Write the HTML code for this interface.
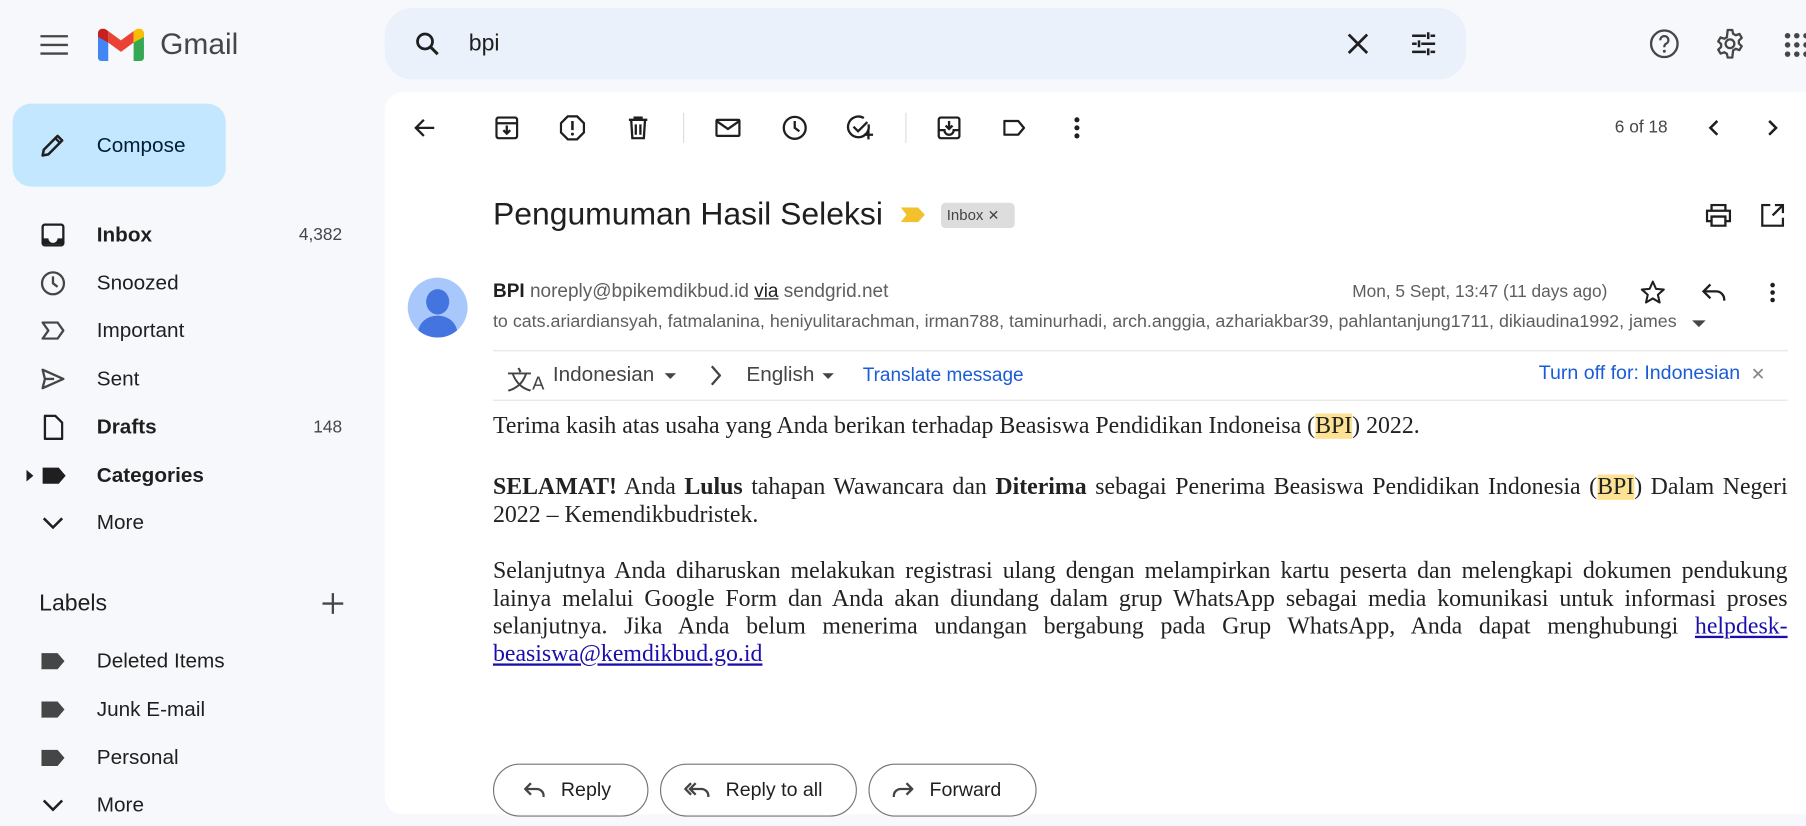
<!DOCTYPE html>
<html><head><meta charset="utf-8"><style>
*{box-sizing:border-box;margin:0;padding:0}
html,body{width:1806px;height:826px;overflow:hidden;background:#f6f8fc}
#w{position:absolute;left:0;top:0;width:1568px;height:717px;transform:scale(1.15179);transform-origin:0 0;font-family:"Liberation Sans",Arial,sans-serif;color:#1f1f1f}
.a{position:absolute}
.ic{position:absolute;transform:translate(-50%,-50%)}
.nav{position:absolute;left:84px;font-size:18px;color:#1f1f1f;transform:translateY(-50%)}
.cnt{position:absolute;right:1271px;font-size:15px;color:#444746;transform:translateY(-50%)}
.tb{position:absolute;top:111px;transform:translate(-50%,-50%)}
.body{position:absolute;left:428px;width:1124px;font-family:"Liberation Serif","Times New Roman",serif;font-size:20.7px;line-height:24px;color:#222;text-align:justify}
.hl{background:#fde293}
.btn{position:absolute;top:663px;height:46px;border:1px solid #747775;border-radius:24px;font-size:17px;color:#1f1f1f;display:flex;align-items:center;padding-left:26px}
.btn svg{margin-right:14px}
</style></head><body><div id="w">
<!-- header -->
<svg class="ic" style="left:47px;top:39px" width="24" height="18" viewBox="0 0 24 18"><path d="M0 1.5h24M0 9h24M0 16.5h24" stroke="#444746" stroke-width="2"/></svg>
<svg class="a" style="left:85px;top:25px" width="40" height="28" viewBox="0 0 40 28"><path d="M0 4v21a3 3 0 0 0 3 3h6V12z" fill="#4285f4"/><path d="M31 12v16h6a3 3 0 0 0 3-3V4z" fill="#34a853"/><path d="M9 12 20 20 31 12V2L20 10 9 2z" fill="#ea4335"/><path d="M0 4v3l9 5V2L6 0C3 -1 0 1 0 4z" fill="#c5221f"/><path d="M31 2v10l9-5V4c0-3-3-5-6-4z" fill="#fbbc04"/></svg>
<div class="a" style="left:139px;top:23px;font-size:26px;color:#444746">Gmail</div>
<div class="a" style="left:334px;top:7px;width:939px;height:62px;border-radius:24px;background:#eaf1fb"></div>
<svg class="ic" style="left:371px;top:38px" width="24" height="24" viewBox="0 0 24 24"><circle cx="10" cy="10" r="6.5" fill="none" stroke="#1f1f1f" stroke-width="2.4"/><path d="M15 15l6 6" stroke="#1f1f1f" stroke-width="2.6"/></svg>
<div class="a" style="left:407px;top:27px;font-size:20px">bpi</div>
<svg class="ic" style="left:1179px;top:38px" width="20" height="20" viewBox="0 0 20 20"><path d="M2 2l16 16M18 2 2 18" stroke="#1f1f1f" stroke-width="2.4"/></svg>
<svg class="ic" style="left:1236px;top:38px" width="24" height="24" viewBox="0 0 24 24"><path d="M2 5h12M18 5h4M2 12h4M10 12h12M2 19h12M18 19h4M16 2v6M8 9v6M16 16v6" stroke="#1f1f1f" stroke-width="2.2" fill="none"/></svg>
<svg class="ic" style="left:1445px;top:38px" width="26" height="26" viewBox="0 0 26 26"><circle cx="13" cy="13" r="11.5" fill="none" stroke="#444746" stroke-width="2"/><path d="M9.5 10a3.5 3.5 0 1 1 5 3c-1.2.7-1.5 1.3-1.5 3" fill="none" stroke="#444746" stroke-width="2"/><circle cx="13" cy="19.5" r="1.3" fill="#444746"/></svg>
<svg class="ic" style="left:1502px;top:38px" width="26" height="26" viewBox="0 0 26 26"><path d="M11 1h4l.7 3.3 2.3 1.3 3.2-1.1 2 3.4-2.5 2.3v2.6l2.5 2.3-2 3.4-3.2-1.1-2.3 1.3L15 25h-4l-.7-3.3-2.3-1.3-3.2 1.1-2-3.4 2.5-2.3v-2.6L2.8 10.9l2-3.4 3.2 1.1 2.3-1.3z" fill="none" stroke="#444746" stroke-width="2" stroke-linejoin="round"/><circle cx="13" cy="13" r="3.8" fill="none" stroke="#444746" stroke-width="2"/></svg>
<svg class="a" style="left:1548px;top:28px" width="20" height="22" viewBox="0 0 20 22"><g fill="#444746"><circle cx="4" cy="3" r="2.4"/><circle cx="12" cy="3" r="2.4"/><circle cx="20" cy="3" r="2.4"/><circle cx="4" cy="11" r="2.4"/><circle cx="12" cy="11" r="2.4"/><circle cx="20" cy="11" r="2.4"/><circle cx="4" cy="19" r="2.4"/><circle cx="12" cy="19" r="2.4"/><circle cx="20" cy="19" r="2.4"/></g></svg>
<!-- compose -->
<div class="a" style="left:11px;top:90px;width:185px;height:72px;border-radius:16px;background:#c2e7ff"></div>
<svg class="ic" style="left:46px;top:126px" width="24" height="24" viewBox="0 0 24 24"><path d="M3 21l1-5L16 4l4 4L8 20z" fill="none" stroke="#1f1f1f" stroke-width="2.2" stroke-linejoin="round"/><path d="M14 6l4 4" stroke="#1f1f1f" stroke-width="2"/></svg>
<div class="a" style="left:84px;top:116px;font-size:18px;color:#001d35">Compose</div>
<!-- nav -->
<svg class="ic" style="left:46px;top:204px" width="20" height="20" viewBox="0 0 20 20"><rect x="1" y="1" width="18" height="18" rx="2" fill="none" stroke="#1f1f1f" stroke-width="2"/><path d="M1 13h5a4 4 0 0 0 8 0h5v5H1z" fill="#1f1f1f"/></svg>
<div class="nav" style="top:204px;font-weight:bold">Inbox</div><div class="cnt" style="top:204px">4,382</div>
<svg class="ic" style="left:46px;top:246px" width="22" height="22" viewBox="0 0 22 22"><circle cx="11" cy="11" r="9.5" fill="none" stroke="#444746" stroke-width="2"/><path d="M11 5v6l4 3" fill="none" stroke="#444746" stroke-width="2"/></svg>
<div class="nav" style="top:246px">Snoozed</div>
<svg class="ic" style="left:46px;top:287px" width="22" height="16" viewBox="0 0 22 16"><path d="M2 1h13l5 7-5 7H2l5-7z" fill="none" stroke="#444746" stroke-width="2" stroke-linejoin="round"/></svg>
<div class="nav" style="top:287px">Important</div>
<svg class="ic" style="left:46px;top:329px" width="22" height="20" viewBox="0 0 22 20"><path d="M2 2l18 8-18 8 2-8zM4 10h8" fill="none" stroke="#444746" stroke-width="2" stroke-linejoin="round"/></svg>
<div class="nav" style="top:329px">Sent</div>
<svg class="ic" style="left:46px;top:371px" width="18" height="22" viewBox="0 0 18 22"><path d="M2 1h9l6 6v14H2z" fill="none" stroke="#1f1f1f" stroke-width="2" stroke-linejoin="round"/></svg>
<div class="nav" style="top:371px;font-weight:bold">Drafts</div><div class="cnt" style="top:371px">148</div>
<svg class="a" style="left:22px;top:408px" width="8" height="10"><path d="M1 0l6 5-6 5z" fill="#1f1f1f"/></svg>
<svg class="ic" style="left:47px;top:413px" width="22" height="16" viewBox="0 0 22 16"><path d="M1 1h14l6 7-6 7H1z" fill="#1f1f1f"/></svg>
<div class="nav" style="top:413px;font-weight:bold">Categories</div>
<svg class="ic" style="left:46px;top:454px" width="20" height="12" viewBox="0 0 20 12"><path d="M2 2l8 8 8-8" fill="none" stroke="#1f1f1f" stroke-width="2.2"/></svg>
<div class="nav" style="top:454px">More</div>
<div class="a" style="left:34px;top:513px;font-size:20px;color:#1f1f1f">Labels</div>
<svg class="ic" style="left:289px;top:524px" width="20" height="20" viewBox="0 0 20 20"><path d="M10 1v18M1 10h18" stroke="#444746" stroke-width="2"/></svg>
<svg class="ic" style="left:46px;top:574px" width="22" height="16" viewBox="0 0 22 16"><path d="M1 1h14l6 7-6 7H1z" fill="#444746"/></svg>
<div class="nav" style="top:574px">Deleted Items</div>
<svg class="ic" style="left:46px;top:616px" width="22" height="16" viewBox="0 0 22 16"><path d="M1 1h14l6 7-6 7H1z" fill="#444746"/></svg>
<div class="nav" style="top:616px">Junk E-mail</div>
<svg class="ic" style="left:46px;top:658px" width="22" height="16" viewBox="0 0 22 16"><path d="M1 1h14l6 7-6 7H1z" fill="#444746"/></svg>
<div class="nav" style="top:658px">Personal</div>
<svg class="ic" style="left:46px;top:699px" width="20" height="12" viewBox="0 0 20 12"><path d="M2 2l8 8 8-8" fill="none" stroke="#1f1f1f" stroke-width="2.2"/></svg>
<div class="nav" style="top:699px">More</div>
<!-- main -->
<div class="a" style="left:334px;top:80px;width:1250px;height:627px;border-radius:16px;background:#fff"></div>
<svg class="tb" style="left:368px" width="20" height="18" viewBox="0 0 20 18"><path d="M19 9H3M10 2 3 9l7 7" fill="none" stroke="#1f1f1f" stroke-width="2"/></svg>
<svg class="tb" style="left:440px" width="20" height="20" viewBox="0 0 20 20"><rect x="1" y="1" width="18" height="18" rx="2" fill="none" stroke="#1f1f1f" stroke-width="2"/><path d="M1 6h18M10 8v7M7 12l3 3 3-3" fill="none" stroke="#1f1f1f" stroke-width="2"/></svg>
<svg class="tb" style="left:497px" width="22" height="22" viewBox="0 0 22 22"><path d="M7 1h8l6 6v8l-6 6H7l-6-6V7z" fill="none" stroke="#1f1f1f" stroke-width="2"/><path d="M11 5v8" stroke="#1f1f1f" stroke-width="2.2"/><circle cx="11" cy="16.5" r="1.3" fill="#1f1f1f"/></svg>
<svg class="tb" style="left:554px" width="18" height="20" viewBox="0 0 18 20"><path d="M1 3h16M6 3V1h6v2M3 3l1 16h10l1-16M7 7v9M11 7v9" fill="none" stroke="#1f1f1f" stroke-width="2"/></svg>
<div class="a" style="left:593px;top:98px;width:1px;height:26px;background:#ddd"></div>
<svg class="tb" style="left:632px" width="22" height="16" viewBox="0 0 22 16"><rect x="1" y="1" width="20" height="14" rx="1" fill="none" stroke="#1f1f1f" stroke-width="2"/><path d="M1 2l10 7 10-7" fill="none" stroke="#1f1f1f" stroke-width="2"/></svg>
<svg class="tb" style="left:690px" width="22" height="22" viewBox="0 0 22 22"><circle cx="11" cy="11" r="9.5" fill="none" stroke="#1f1f1f" stroke-width="2"/><path d="M11 5v6l4 3" fill="none" stroke="#1f1f1f" stroke-width="2"/></svg>
<svg class="tb" style="left:747px" width="24" height="22" viewBox="0 0 24 22"><path d="M19 8a9 9 0 1 1-4-5.5" fill="none" stroke="#1f1f1f" stroke-width="2"/><path d="M6 10l4 4 8-8M19 13v8M15 17h8" fill="none" stroke="#1f1f1f" stroke-width="2"/></svg>
<div class="a" style="left:786px;top:98px;width:1px;height:26px;background:#ddd"></div>
<svg class="tb" style="left:824px" width="20" height="20" viewBox="0 0 20 20"><rect x="1" y="1" width="18" height="18" rx="2" fill="none" stroke="#1f1f1f" stroke-width="2"/><path d="M1 12h5a4 4 0 0 0 8 0h5M10 4v7M7 8l3 3 3-3" fill="none" stroke="#1f1f1f" stroke-width="2"/></svg>
<svg class="tb" style="left:881px" width="20" height="14" viewBox="0 0 20 14"><path d="M1 1h12l5 6-5 6H1z" fill="none" stroke="#1f1f1f" stroke-width="2" stroke-linejoin="round"/></svg>
<svg class="tb" style="left:935px" width="6" height="20" viewBox="0 0 6 20"><circle cx="3" cy="3" r="2.2" fill="#1f1f1f"/><circle cx="3" cy="10" r="2.2" fill="#1f1f1f"/><circle cx="3" cy="17" r="2.2" fill="#1f1f1f"/></svg>
<div class="a" style="left:1402px;top:102px;font-size:15px;color:#444746">6 of 18</div>
<svg class="tb" style="left:1488px" width="10" height="16" viewBox="0 0 10 16"><path d="M8 2 2 8l6 6" fill="none" stroke="#1f1f1f" stroke-width="2.2"/></svg>
<svg class="tb" style="left:1539px" width="10" height="16" viewBox="0 0 10 16"><path d="M2 2l6 6-6 6" fill="none" stroke="#1f1f1f" stroke-width="2.2"/></svg>
<!-- subject -->
<div class="a" style="left:428px;top:170px;font-size:27.7px;color:#1f1f1f">Pengumuman Hasil Seleksi</div>
<svg class="a" style="left:782px;top:180px" width="22" height="13" viewBox="0 0 22 13"><path d="M0 0h15l6 6.5-6 6.5H0l5-6.5z" fill="#f2c12e"/></svg>
<div class="a" style="left:817px;top:176px;width:64px;height:22px;background:#ddd;border-radius:4px;font-size:13px;color:#444;padding:3px 0 0 5px">Inbox <span style="font-size:12px">✕</span></div>
<svg class="ic" style="left:1492px;top:187px" width="22" height="20" viewBox="0 0 22 20"><path d="M5 6V1h12v5M5 15H1V6h20v9h-4M5 11h12v8H5z" fill="none" stroke="#1f1f1f" stroke-width="2"/></svg>
<svg class="ic" style="left:1539px;top:187px" width="20" height="20" viewBox="0 0 20 20"><path d="M8 1H1v18h18v-7M12 1h7v7M19 1l-9 9" fill="none" stroke="#1f1f1f" stroke-width="2"/></svg>
<!-- sender -->
<div class="a" style="left:354px;top:241px;width:52px;height:52px;border-radius:50%;background:#a8c7fa;overflow:hidden"><div class="a" style="left:16px;top:10px;width:20px;height:22px;border-radius:50%;background:#4374e0"></div><div class="a" style="left:9px;top:33px;width:34px;height:30px;border-radius:50%;background:#4374e0"></div></div>
<div class="a" style="left:428px;top:244px;font-size:16.5px;color:#5e5e5e"><b style="color:#1f1f1f">BPI</b> noreply@bpikemdikbud.id <u style="color:#1f1f1f">via</u> sendgrid.net</div>
<div class="a" style="left:1174px;top:245px;font-size:15px;color:#5e5e5e">Mon, 5 Sept, 13:47 (11 days ago)</div>
<svg class="ic" style="left:1435px;top:254px" width="22" height="22" viewBox="0 0 22 22"><path d="M11 1.5l2.8 6.3 6.7.6-5.1 4.5 1.5 6.7L11 16.1l-5.9 3.5 1.5-6.7L1.5 8.4l6.7-.6z" fill="none" stroke="#1f1f1f" stroke-width="1.8" stroke-linejoin="round"/></svg>
<svg class="ic" style="left:1488px;top:254px" width="22" height="16" viewBox="0 0 22 16"><path d="M8 1 2 7l6 6M2 7h11a7 7 0 0 1 7 7v1" fill="none" stroke="#1f1f1f" stroke-width="2"/></svg>
<svg class="ic" style="left:1539px;top:254px" width="6" height="18" viewBox="0 0 6 18"><circle cx="3" cy="2.5" r="2" fill="#1f1f1f"/><circle cx="3" cy="9" r="2" fill="#1f1f1f"/><circle cx="3" cy="15.5" r="2" fill="#1f1f1f"/></svg>
<div class="a" style="left:428px;top:271px;width:1034px;overflow:hidden;white-space:nowrap;font-size:15.5px;color:#5e5e5e">to cats.ariardiansyah, fatmalanina, heniyulitarachman, irman788, taminurhadi, arch.anggia, azhariakbar39, pahlantanjung1711, dikiaudina1992, james</div>
<svg class="a" style="left:1469px;top:278px" width="12" height="7"><path d="M0 0h12L6 6z" fill="#444746"/></svg>
<div class="a" style="left:428px;top:304px;width:1124px;height:1px;background:#e5e5e5"></div>
<div class="a" style="left:428px;top:347px;width:1124px;height:1px;background:#e5e5e5"></div>
<div class="a" style="left:440px;top:313px;font-size:22px;color:#444">文<span style="font-size:16px">A</span></div>
<div class="a" style="left:480px;top:315px;font-size:18px;color:#444">Indonesian</div>
<svg class="a" style="left:577px;top:324px" width="10" height="5"><path d="M0 0h10L5 5z" fill="#444"/></svg>
<svg class="a" style="left:616px;top:317px" width="10" height="18"><path d="M2 1l7 8-7 8" fill="none" stroke="#444" stroke-width="2"/></svg>
<div class="a" style="left:648px;top:315px;font-size:18px;color:#444">English</div>
<svg class="a" style="left:714px;top:324px" width="10" height="5"><path d="M0 0h10L5 5z" fill="#444"/></svg>
<div class="a" style="left:749px;top:317px;font-size:16.5px;color:#1a5cd6">Translate message</div>
<div class="a" style="left:1336px;top:314px;font-size:17px;color:#1a5cd6">Turn off for: Indonesian</div>
<div class="a" style="left:1520px;top:316px;font-size:15px;color:#888">✕</div>
<!-- body -->
<div class="body" style="top:358px">Terima kasih atas usaha yang Anda berikan terhadap Beasiswa Pendidikan Indoneisa (<span class="hl">BPI</span>) 2022.</div>
<div class="body" style="top:411px"><b>SELAMAT!</b> Anda <b>Lulus</b> tahapan Wawancara dan <b>Diterima</b> sebagai Penerima Beasiswa Pendidikan Indonesia (<span class="hl">BPI</span>) Dalam Negeri 2022 – Kemendikbudristek.</div>
<div class="body" style="top:484px">Selanjutnya Anda diharuskan melakukan registrasi ulang dengan melampirkan kartu peserta dan melengkapi dokumen pendukung lainya melalui Google Form dan Anda akan diundang dalam grup WhatsApp sebagai media komunikasi untuk informasi proses selanjutnya. Jika Anda belum menerima undangan bergabung pada Grup WhatsApp, Anda dapat menghubungi <u style="color:#1a0dab">helpdesk-beasiswa@kemdikbud.go.id</u></div>
<!-- buttons -->
<div class="btn" style="left:428px;width:135px"><svg width="18" height="14" viewBox="0 0 18 14"><path d="M6 1 1 6l5 5M1 6h10a6 6 0 0 1 6 6v1" fill="none" stroke="#444" stroke-width="2"/></svg>Reply</div>
<div class="btn" style="left:573px;width:171px;padding-left:20px"><svg width="22" height="14" viewBox="0 0 22 14"><path d="M6 1 1 6l5 5M10 1 5 6l5 5M5 6h10a6 6 0 0 1 6 6v1" fill="none" stroke="#444" stroke-width="2"/></svg>Reply to all</div>
<div class="btn" style="left:754px;width:146px;padding-left:20px"><svg width="18" height="14" viewBox="0 0 18 14"><path d="M12 1l5 5-5 5M17 6H7a6 6 0 0 0-6 6v1" fill="none" stroke="#444" stroke-width="2"/></svg>Forward</div>
</div></body></html>
